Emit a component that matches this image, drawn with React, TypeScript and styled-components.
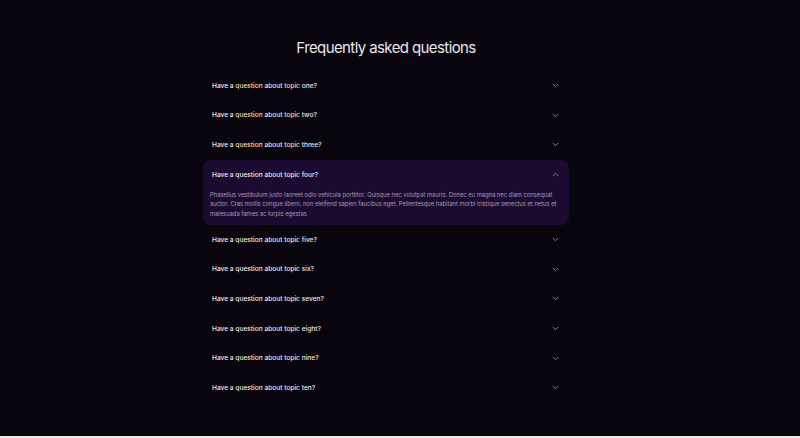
import React, { useState } from "react";
import styled, { createGlobalStyle } from "styled-components";

const Global = createGlobalStyle`
  html, body { margin: 0; padding: 0; background: #ececec; }
  body { font-family: Inter, "Noto Sans", sans-serif; }
`;

const Page = styled.div`
  height: 436px;
  background: #08050f;
  display: flex;
  flex-direction: column;
  align-items: center;
  padding: 38px 28px 0 0;
  box-sizing: border-box;
`;

const Title = styled.h1`
  margin: 0 0 13px;
  font-size: 15px;
  font-weight: 400;
  letter-spacing: -0.6px;
  color: #e9e7ee;
  line-height: 20px;
`;

const List = styled.div`
  width: 366px;
  display: flex;
  flex-direction: column;
`;

const Item = styled.div<{ $open: boolean }>`
  border-radius: 8px;
  background: ${(p) => (p.$open ? "#1c0b31" : "transparent")};
  padding-bottom: ${(p) => (p.$open ? "7px" : "0")};
`;

const Header = styled.button<{ $open: boolean }>`
  all: unset;
  box-sizing: border-box;
  width: 100%;
  height: ${(p) => (p.$open ? "29px" : "29.6px")};
  padding-top: ${(p) => (p.$open ? "1px" : "0")};
  display: flex;
  align-items: center;
  justify-content: space-between;
  padding-left: 9px;
  padding-right: 10px;
  cursor: pointer;
  font-family: Inter, sans-serif;
  font-size: 6.6px;
  font-weight: 500;
  color: #e8e6ec;
`;

const Hl = styled.span<{ $on: boolean }>`
  color: ${(p) => (p.$on ? "#f3d9b3" : "inherit")};
`;

const Answer = styled.p`
  margin: 0;
  padding: 1px 10px 0 7px;
  font-size: 5.8px;
  line-height: 9.4px;
  color: #a89bb6;
`;

const Chevron = ({ up }: { up: boolean }) => (
  <svg width="7" height="5" viewBox="0 0 7 5" fill="none">
    <path
      d={up ? "M1 3.8 L3.5 1.3 L6 3.8" : "M1 1.2 L3.5 3.7 L6 1.2"}
      stroke="#a8a1b4"
      strokeWidth="0.8"
      strokeLinecap="round"
      strokeLinejoin="round"
    />
  </svg>
);

const topics = ["one", "two", "three", "four", "five", "six", "seven", "eight", "nine", "ten"];
const answer =
  "Phasellus vestibulum justo laoreet odio vehicula porttitor. Quisque nec volutpat mauris. Donec eu magna nec diam consequat auctor. Cras mollis congue libero, non eleifend sapien faucibus eget. Pellentesque habitant morbi tristique senectus et netus et malesuada fames ac turpis egestas";

export default function App() {
  const [open, setOpen] = useState(3);
  return (
    <>
      <Global />
      <Page>
        <Title>Frequently asked questions</Title>
        <List>
          {topics.map((t, i) => {
            const isOpen = open === i;
            const hl = i < 3;
            return (
              <Item key={t} $open={isOpen}>
                <Header $open={isOpen} onClick={() => setOpen(isOpen ? -1 : i)}>
                  <span>
                    Have a <Hl $on={hl}>question</Hl> about <Hl $on={hl}>topic</Hl> {t}?
                  </span>
                  <Chevron up={isOpen} />
                </Header>
                {isOpen && <Answer>{answer}</Answer>}
              </Item>
            );
          })}
        </List>
      </Page>
    </>
  );
}
